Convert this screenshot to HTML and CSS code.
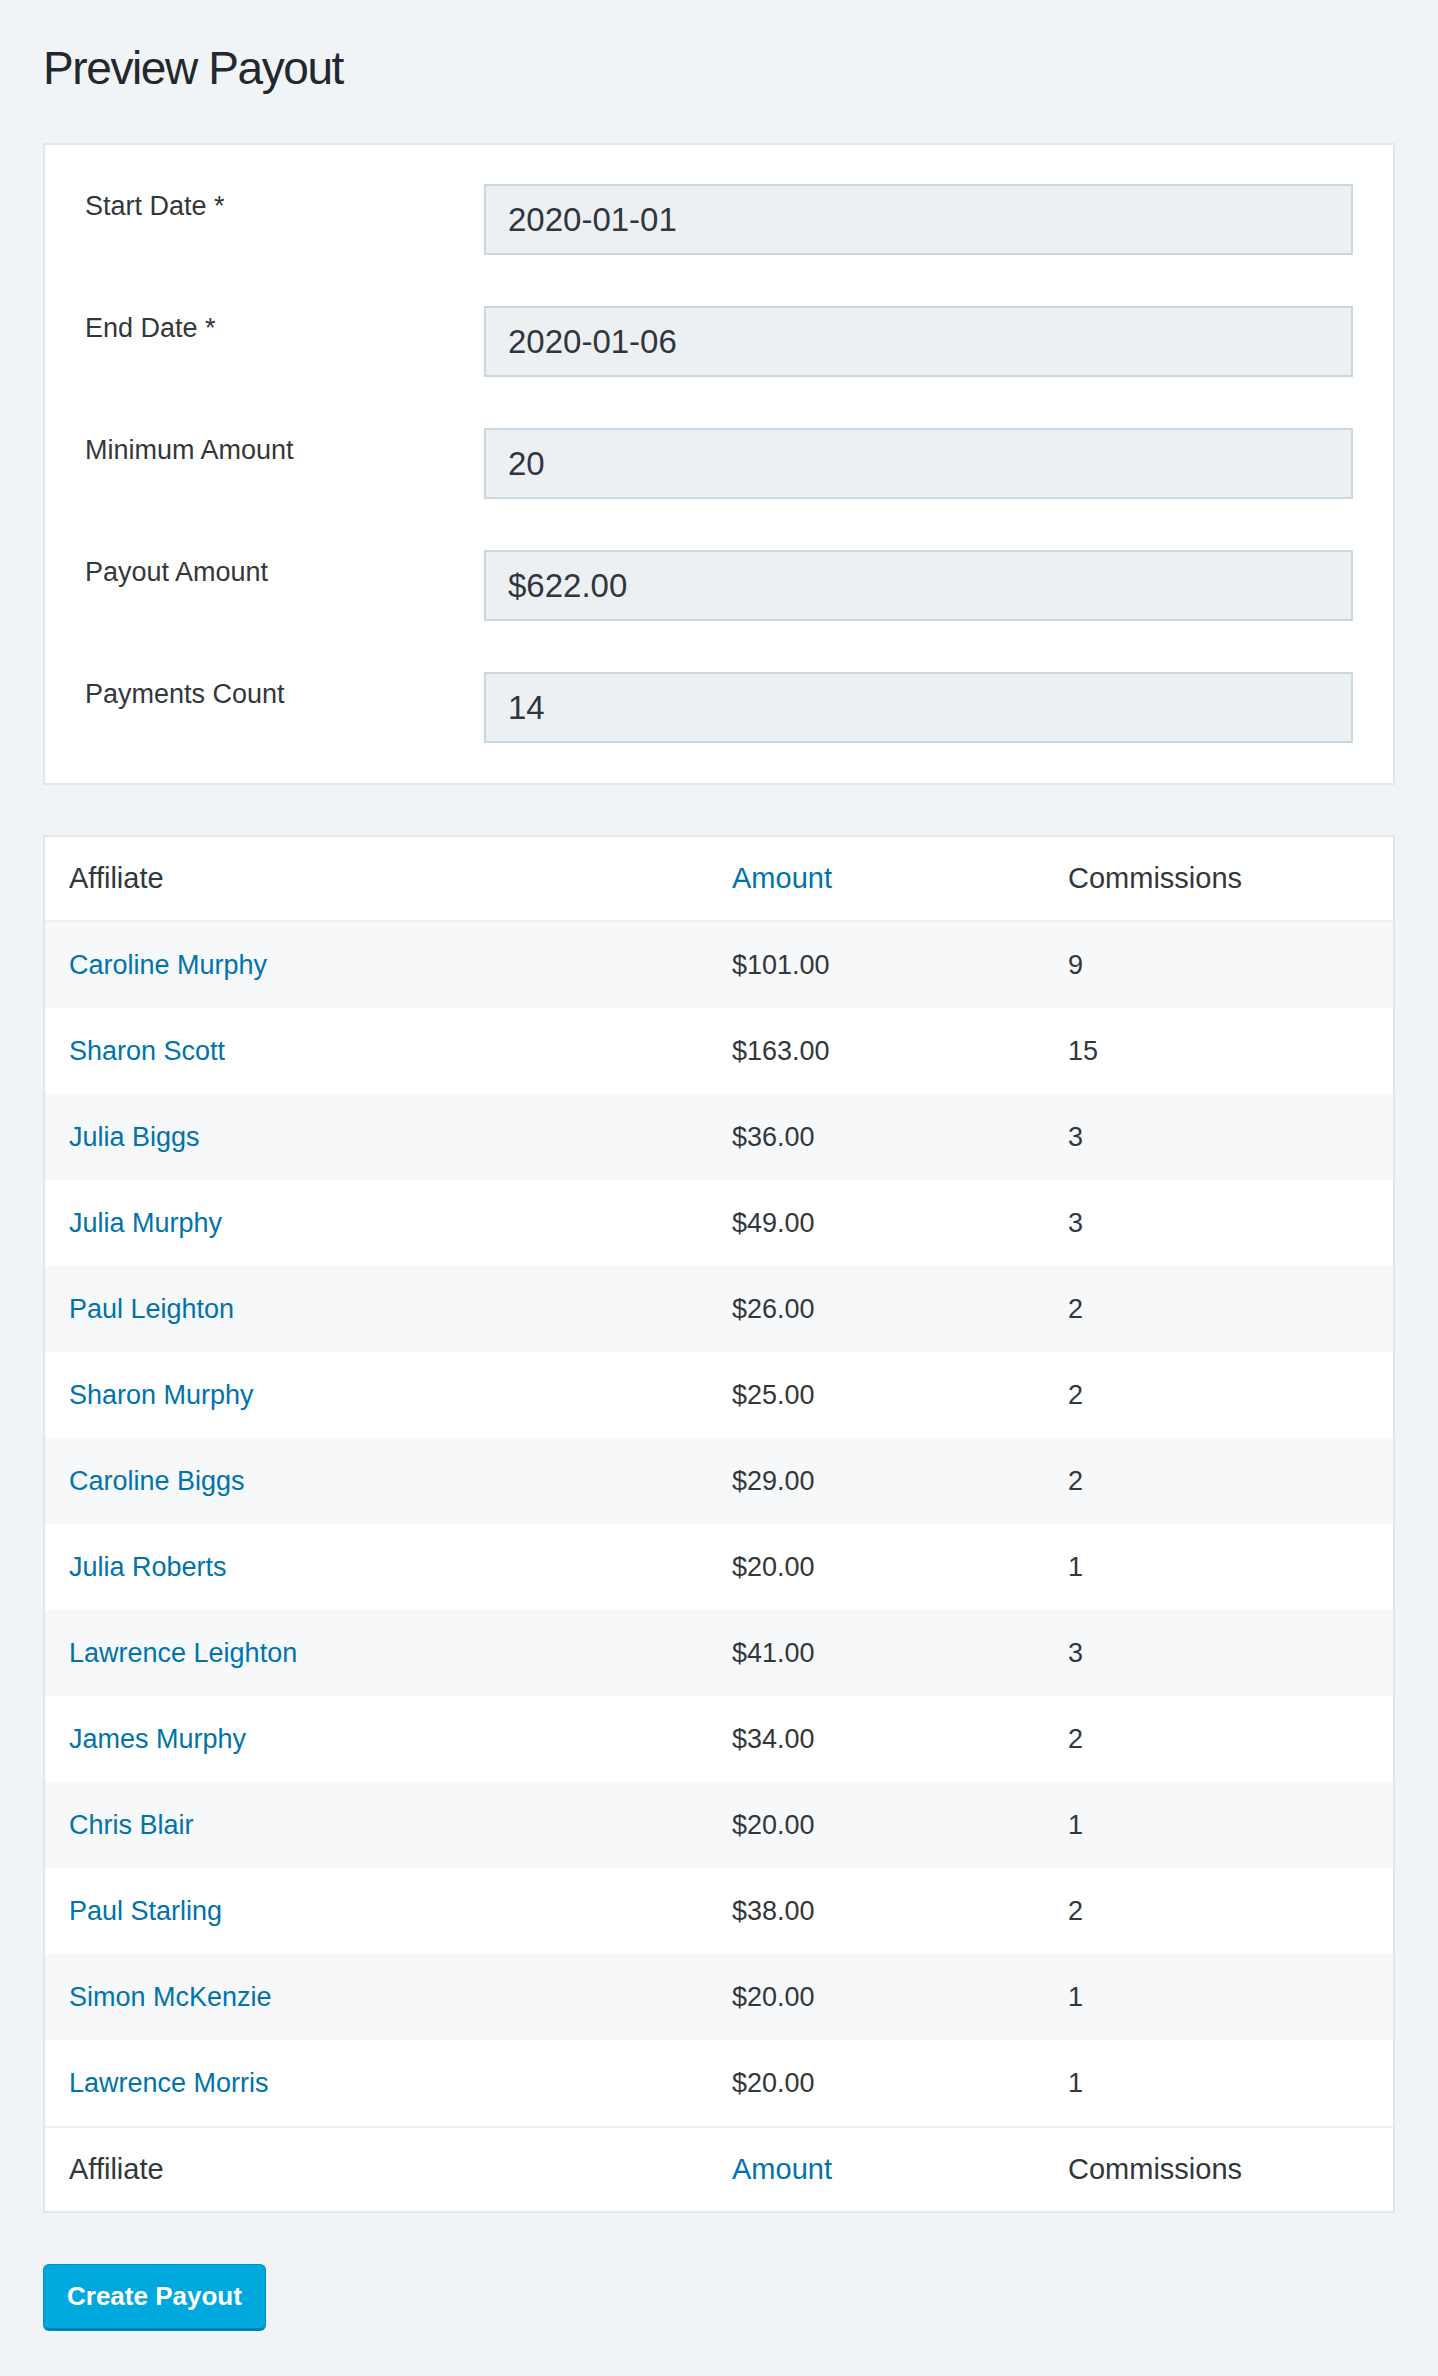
FILE: index.html
```html
<!DOCTYPE html>
<html lang="en">
<head>
<meta charset="utf-8">
<title>Preview Payout</title>
<link rel="stylesheet" href="styles.css">
</head>
<body>
<div class="page">
  <h1 class="page-title">Preview Payout</h1>

  <div class="panel form-panel">
    <div class="form-row">
      <label class="form-label">Start Date *</label>
      <input class="form-input" type="text" value="2020-01-01" readonly>
    </div>
    <div class="form-row">
      <label class="form-label">End Date *</label>
      <input class="form-input" type="text" value="2020-01-06" readonly>
    </div>
    <div class="form-row">
      <label class="form-label">Minimum Amount</label>
      <input class="form-input" type="text" value="20" readonly>
    </div>
    <div class="form-row">
      <label class="form-label">Payout Amount</label>
      <input class="form-input" type="text" value="$622.00" readonly>
    </div>
    <div class="form-row">
      <label class="form-label">Payments Count</label>
      <input class="form-input" type="text" value="14" readonly>
    </div>
  </div>

  <div class="panel table-panel">
    <table class="data-table">
      <thead>
        <tr>
          <th class="col-affiliate">Affiliate</th>
          <th class="col-amount"><a class="link" href="#">Amount</a></th>
          <th class="col-commissions">Commissions</th>
        </tr>
      </thead>
      <tbody>
        <tr><td><a class="link" href="#">Caroline Murphy</a></td><td>$101.00</td><td>9</td></tr>
        <tr><td><a class="link" href="#">Sharon Scott</a></td><td>$163.00</td><td>15</td></tr>
        <tr><td><a class="link" href="#">Julia Biggs</a></td><td>$36.00</td><td>3</td></tr>
        <tr><td><a class="link" href="#">Julia Murphy</a></td><td>$49.00</td><td>3</td></tr>
        <tr><td><a class="link" href="#">Paul Leighton</a></td><td>$26.00</td><td>2</td></tr>
        <tr><td><a class="link" href="#">Sharon Murphy</a></td><td>$25.00</td><td>2</td></tr>
        <tr><td><a class="link" href="#">Caroline Biggs</a></td><td>$29.00</td><td>2</td></tr>
        <tr><td><a class="link" href="#">Julia Roberts</a></td><td>$20.00</td><td>1</td></tr>
        <tr><td><a class="link" href="#">Lawrence Leighton</a></td><td>$41.00</td><td>3</td></tr>
        <tr><td><a class="link" href="#">James Murphy</a></td><td>$34.00</td><td>2</td></tr>
        <tr><td><a class="link" href="#">Chris Blair</a></td><td>$20.00</td><td>1</td></tr>
        <tr><td><a class="link" href="#">Paul Starling</a></td><td>$38.00</td><td>2</td></tr>
        <tr><td><a class="link" href="#">Simon McKenzie</a></td><td>$20.00</td><td>1</td></tr>
        <tr><td><a class="link" href="#">Lawrence Morris</a></td><td>$20.00</td><td>1</td></tr>
      </tbody>
      <tfoot>
        <tr>
          <th class="col-affiliate">Affiliate</th>
          <th class="col-amount"><a class="link" href="#">Amount</a></th>
          <th class="col-commissions">Commissions</th>
        </tr>
      </tfoot>
    </table>
  </div>

  <button class="btn-primary" type="button">Create Payout</button>
</div>
</body>
</html>
```

FILE: styles.css
```css
* {
  box-sizing: border-box;
}

html, body {
  margin: 0;
  padding: 0;
}

body {
  background: #f1f4f7;
  font-family: "Liberation Sans", Arial, sans-serif;
  color: #32373c;
}

.page {
  padding: 0 43px 45px 43px;
}

.page-title {
  margin: 0 0 47px 0;
  padding-top: 40px;
  font-size: 46px;
  line-height: 56px;
  font-weight: 400;
  letter-spacing: -1.4px;
  color: #23282d;
}

.panel {
  background: #ffffff;
  border: 2px solid #dfe6ec;
}

.form-panel {
  padding: 39px 40px 40px 40px;
  display: flex;
  flex-direction: column;
  gap: 51px;
}

.form-row {
  display: grid;
  grid-template-columns: 399px 1fr;
  align-items: start;
}

.form-label {
  padding-top: 4px;
  font-size: 27px;
  line-height: 36px;
  color: #32373c;
}

.form-input {
  display: block;
  width: 100%;
  height: 71px;
  margin: 0;
  padding: 0 22px;
  background: #ecf0f3;
  border: 2px solid #c9d7e1;
  border-radius: 0;
  font-family: "Liberation Sans", Arial, sans-serif;
  font-size: 33px;
  color: #2f363d;
  outline: none;
}

.table-panel {
  margin-top: 50px;
}

.data-table {
  width: 100%;
  table-layout: fixed;
  border-collapse: separate;
  border-spacing: 0;
}

.col-affiliate {
  width: 663px;
}

.col-amount {
  width: 336px;
}

.data-table th {
  height: 85px;
  padding: 0 24px;
  text-align: left;
  vertical-align: middle;
  font-size: 29px;
  font-weight: 400;
  color: #32373c;
}

.data-table thead th {
  border-bottom: 2px solid #eef1f4;
}

.data-table tfoot th {
  border-top: 2px solid #eef1f4;
}

.data-table td {
  height: 86px;
  padding: 1px 24px 0 24px;
  vertical-align: middle;
  font-size: 27px;
  color: #32373c;
}

.data-table tbody tr:nth-child(odd) td {
  background: #f6f8fa;
}

.link {
  color: #0073aa;
  text-decoration: none;
}

.btn-primary {
  display: block;
  margin-top: 51px;
  height: 67px;
  padding: 0 23px;
  background: #00a9dd;
  border: 1px solid #0090c4;
  border-bottom: 3px solid #0085ba;
  border-radius: 6px;
  font-family: "Liberation Sans", Arial, sans-serif;
  font-size: 26px;
  font-weight: 700;
  color: #ffffff;
  cursor: pointer;
}
```
